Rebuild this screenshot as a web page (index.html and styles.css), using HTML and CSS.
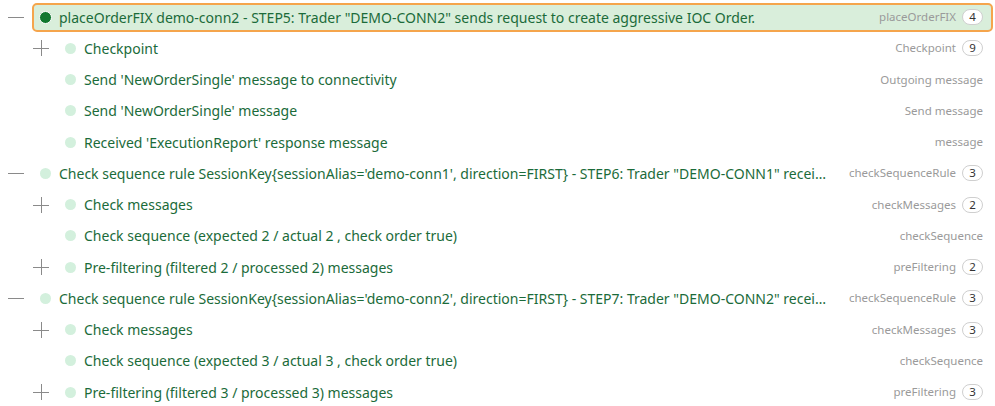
FILE: index.html
```html
<!DOCTYPE html>
<html>
<head>
<meta charset="utf-8">
<link rel="stylesheet" href="styles.css">
</head>
<body>
<div class="tree">
  <div class="row lvl0">
    <span class="toggle"><svg width="16" height="16" viewBox="0 0 16 16"><path d="M0 8.5H16" stroke="#8a8a8a" stroke-width="1"/></svg></span>
    <div class="card active">
      <span class="dot"></span>
      <span class="name">placeOrderFIX demo-conn2 - STEP5: Trader "DEMO-CONN2" sends request to create aggressive IOC Order.</span>
      <span class="type">placeOrderFIX</span>
      <span class="count">4</span>
    </div>
  </div>
  <div class="row lvl1">
    <span class="toggle"><svg width="16" height="16" viewBox="0 0 16 16"><path d="M0 8.5H16M8.5 0V16" stroke="#8a8a8a" stroke-width="1"/></svg></span>
    <div class="card">
      <span class="dot"></span>
      <span class="name">Checkpoint</span>
      <span class="type">Checkpoint</span>
      <span class="count">9</span>
    </div>
  </div>
  <div class="row lvl1">
    <span class="toggle"></span>
    <div class="card">
      <span class="dot"></span>
      <span class="name">Send 'NewOrderSingle' message to connectivity</span>
      <span class="type">Outgoing message</span>
    </div>
  </div>
  <div class="row lvl1">
    <span class="toggle"></span>
    <div class="card">
      <span class="dot"></span>
      <span class="name">Send 'NewOrderSingle' message</span>
      <span class="type">Send message</span>
    </div>
  </div>
  <div class="row lvl1">
    <span class="toggle"></span>
    <div class="card">
      <span class="dot"></span>
      <span class="name">Received 'ExecutionReport' response message</span>
      <span class="type">message</span>
    </div>
  </div>
  <div class="row lvl0">
    <span class="toggle"><svg width="16" height="16" viewBox="0 0 16 16"><path d="M0 8.5H16" stroke="#8a8a8a" stroke-width="1"/></svg></span>
    <div class="card">
      <span class="dot"></span>
      <span class="name">Check sequence rule SessionKey{sessionAlias='demo-conn1', direction=FIRST} - STEP6: Trader "DEMO-CONN1" receives Execution Report. The order stands on book in status NEW</span>
      <span class="type">checkSequenceRule</span>
      <span class="count">3</span>
    </div>
  </div>
  <div class="row lvl1">
    <span class="toggle"><svg width="16" height="16" viewBox="0 0 16 16"><path d="M0 8.5H16M8.5 0V16" stroke="#8a8a8a" stroke-width="1"/></svg></span>
    <div class="card">
      <span class="dot"></span>
      <span class="name">Check messages</span>
      <span class="type">checkMessages</span>
      <span class="count">2</span>
    </div>
  </div>
  <div class="row lvl1">
    <span class="toggle"></span>
    <div class="card">
      <span class="dot"></span>
      <span class="name">Check sequence (expected 2 / actual 2 , check order true)</span>
      <span class="type">checkSequence</span>
    </div>
  </div>
  <div class="row lvl1">
    <span class="toggle"><svg width="16" height="16" viewBox="0 0 16 16"><path d="M0 8.5H16M8.5 0V16" stroke="#8a8a8a" stroke-width="1"/></svg></span>
    <div class="card">
      <span class="dot"></span>
      <span class="name">Pre-filtering (filtered 2 / processed 2) messages</span>
      <span class="type">preFiltering</span>
      <span class="count">2</span>
    </div>
  </div>
  <div class="row lvl0">
    <span class="toggle"><svg width="16" height="16" viewBox="0 0 16 16"><path d="M0 8.5H16" stroke="#8a8a8a" stroke-width="1"/></svg></span>
    <div class="card">
      <span class="dot"></span>
      <span class="name">Check sequence rule SessionKey{sessionAlias='demo-conn2', direction=FIRST} - STEP7: Trader "DEMO-CONN2" receives Execution Report. The order stands on book in status NEW</span>
      <span class="type">checkSequenceRule</span>
      <span class="count">3</span>
    </div>
  </div>
  <div class="row lvl1">
    <span class="toggle"><svg width="16" height="16" viewBox="0 0 16 16"><path d="M0 8.5H16M8.5 0V16" stroke="#8a8a8a" stroke-width="1"/></svg></span>
    <div class="card">
      <span class="dot"></span>
      <span class="name">Check messages</span>
      <span class="type">checkMessages</span>
      <span class="count">3</span>
    </div>
  </div>
  <div class="row lvl1">
    <span class="toggle"></span>
    <div class="card">
      <span class="dot"></span>
      <span class="name">Check sequence (expected 3 / actual 3 , check order true)</span>
      <span class="type">checkSequence</span>
    </div>
  </div>
  <div class="row lvl1">
    <span class="toggle"><svg width="16" height="16" viewBox="0 0 16 16"><path d="M0 8.5H16M8.5 0V16" stroke="#8a8a8a" stroke-width="1"/></svg></span>
    <div class="card">
      <span class="dot"></span>
      <span class="name">Pre-filtering (filtered 3 / processed 3) messages</span>
      <span class="type">preFiltering</span>
      <span class="count">3</span>
    </div>
  </div>
</div>
</body>
</html>
```
FILE: styles.css
```css
html, body {
  margin: 0;
  padding: 0;
  background: #ffffff;
}
body {
  font-family: "Noto Sans", "Open Sans", sans-serif;
  width: 995px;
  height: 406px;
  overflow: hidden;
}
.tree {
  display: flex;
  flex-direction: column;
  padding-top: 1.5px;
  padding-right: 2px;
}
.row {
  display: flex;
  align-items: center;
  height: 31.25px;
}
.lvl0 { padding-left: 8px; }
.lvl1 { padding-left: 33px; }
.toggle {
  width: 16px;
  height: 16px;
  flex: none;
  margin-right: 8px;
  display: flex;
}
.card {
  flex: 1;
  min-width: 0;
  display: flex;
  align-items: center;
  height: 29px;
  box-sizing: border-box;
  border: 2px solid transparent;
  border-radius: 5px;
  padding: 0 8px 0 6px;
}
.card.active {
  background: #d9eedb;
  border-color: #f5a54c;
}
.dot {
  flex: none;
  width: 11px;
  height: 11px;
  border-radius: 50%;
  background: #d3f0dd;
  margin-right: 8px;
  box-sizing: border-box;
}
.card.active .dot {
  background: #11782f;
  border: 1.5px solid #ffffff;
  width: 13px;
  height: 13px;
  margin-right: 7px;
  margin-left: -1px;
}
.name {
  flex: 1;
  min-width: 0;
  white-space: nowrap;
  overflow: hidden;
  text-overflow: ellipsis;
  color: #1b6b3a;
  font-size: 14px;
  margin-right: 22px;
}
.type {
  flex: none;
  color: #9a9a9a;
  font-size: 11.5px;
  line-height: 16px;
  white-space: nowrap;
}
.count {
  flex: none;
  margin-left: 6px;
  min-width: 21px;
  height: 16px;
  box-sizing: border-box;
  border: 1px solid #cfcfcf;
  border-radius: 8px;
  background: #ffffff;
  color: #333333;
  font-size: 11.5px;
  line-height: 14px;
  display: flex;
  align-items: center;
  justify-content: center;
}
```
